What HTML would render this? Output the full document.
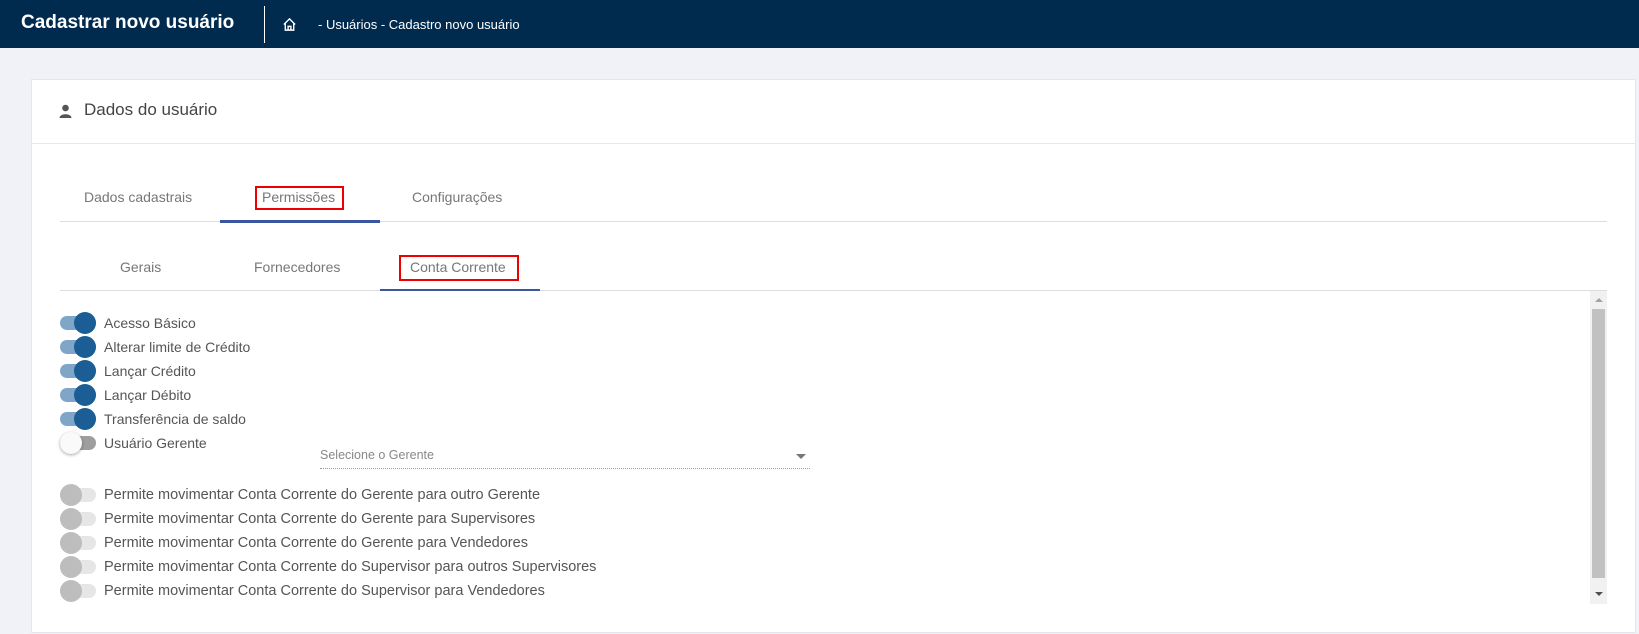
<!DOCTYPE html>
<html><head><meta charset="utf-8"><style>
*{margin:0;padding:0;box-sizing:border-box}
body{width:1639px;height:634px;background:#f1f2f7;font-family:"Liberation Sans",sans-serif;position:relative;overflow:hidden;color:#555}
.hdr{position:absolute;left:0;top:0;width:1639px;height:48px;background:#002b4f}
.abs{position:absolute;white-space:nowrap}
.card{position:absolute;left:31px;top:79px;width:1605px;height:554px;background:#fff;border:1px solid #e6e6ea}
.line{position:absolute;height:1px;background:#e0e0e0}
.tog{position:absolute;left:60px;width:36px;height:14px;border-radius:7px}
.knob{position:absolute;top:-4px;width:22px;height:22px;border-radius:50%}
.lbl{position:absolute;left:104px;font-size:14px;color:#555;white-space:nowrap}
.lb2{font-size:14.5px}
</style></head><body>
<div class="hdr"></div>
<div class="abs" style="left:21px;top:12px;font-size:19px;font-weight:bold;color:#fff">Cadastrar novo usuário</div>
<div class="abs" style="left:264px;top:6px;width:1px;height:37px;background:#fff"></div>
<svg class="abs" style="left:282px;top:17px" width="15" height="15" viewBox="0 0 16 16" fill="none" stroke="#fff" stroke-width="1.5"><path d="M2 8 L8 2 L14 8 M3.5 6.5 V14 H12.5 V6.5 M6.5 14 V10 H9.5 V14"/></svg>
<div class="abs" style="left:318px;top:17px;font-size:13px;color:#fff">- Usuários - Cadastro novo usuário</div>

<div class="card"></div>
<svg class="abs" style="left:59px;top:104px" width="13" height="14" viewBox="0 0 13 14"><circle cx="6.5" cy="4" r="3.3" fill="#555"/><path d="M0.5 14 C0.5 9 12.5 9 12.5 14Z" fill="#555"/></svg>
<div class="abs" style="left:84px;top:100px;font-size:17px;color:#444">Dados do usuário</div>
<div class="line" style="left:32px;top:143px;width:1603px;background:#e8e8ec"></div>

<div class="abs" style="left:84px;top:189px;font-size:14px;color:#777">Dados cadastrais</div>
<div class="abs" style="left:255px;top:186px;width:89px;height:24px;border:2px solid #e00"></div>
<div class="abs" style="left:262px;top:189px;font-size:14px;color:#777">Permissões</div>
<div class="abs" style="left:412px;top:189px;font-size:14px;color:#777">Configurações</div>
<div class="line" style="left:60px;top:221px;width:1547px;background:#ddd"></div>
<div class="abs" style="left:220px;top:220px;width:160px;height:3px;background:#3a56a0"></div>

<div class="abs" style="left:120px;top:259px;font-size:14px;color:#777">Gerais</div>
<div class="abs" style="left:254px;top:259px;font-size:14px;color:#777">Fornecedores</div>
<div class="abs" style="left:399px;top:255px;width:120px;height:26px;border:2px solid #e00"></div>
<div class="abs" style="left:410px;top:259px;font-size:14px;color:#777">Conta Corrente</div>
<div class="line" style="left:60px;top:290px;width:1547px;background:#ddd"></div>
<div class="abs" style="left:380px;top:289px;width:160px;height:2px;background:#3a56a0"></div>

<div class="abs" style="left:1590px;top:291px;width:17px;height:313px;background:#f1f1f1"></div>
<div class="abs" style="left:1592px;top:309px;width:13px;height:269px;background:#c1c1c1"></div>
<div class="abs" style="left:1595px;top:298px;width:0;height:0;border:4px solid transparent;border-bottom:4px solid #a3a3a3;border-top:0"></div>
<div class="abs" style="left:1595px;top:592px;width:0;height:0;border:4px solid transparent;border-top:4px solid #505050;border-bottom:0"></div>

<div class="tog" style="top:316px;background:#7fa6c8"><div class="knob" style="left:14px;background:#1b5e96"></div></div><div class="lbl" style="top:315px">Acesso Básico</div>
<div class="tog" style="top:340px;background:#7fa6c8"><div class="knob" style="left:14px;background:#1b5e96"></div></div><div class="lbl" style="top:339px">Alterar limite de Crédito</div>
<div class="tog" style="top:364px;background:#7fa6c8"><div class="knob" style="left:14px;background:#1b5e96"></div></div><div class="lbl" style="top:363px">Lançar Crédito</div>
<div class="tog" style="top:388px;background:#7fa6c8"><div class="knob" style="left:14px;background:#1b5e96"></div></div><div class="lbl" style="top:387px">Lançar Débito</div>
<div class="tog" style="top:412px;background:#7fa6c8"><div class="knob" style="left:14px;background:#1b5e96"></div></div><div class="lbl" style="top:411px">Transferência de saldo</div>
<div class="tog" style="top:436px;background:#9e9e9e"><div class="knob" style="left:0;background:#fafafa;box-shadow:0 1px 3px rgba(0,0,0,.35)"></div></div><div class="lbl" style="top:435px">Usuário Gerente</div>

<div class="abs" style="left:320px;top:448px;font-size:12.5px;color:#888">Selecione o Gerente</div>
<div class="abs" style="left:320px;top:468px;width:490px;border-top:1px dotted #999"></div>
<div class="abs" style="left:796px;top:454px;width:0;height:0;border:5px solid transparent;border-top:5px solid #777;border-bottom:0"></div>

<div class="tog" style="top:488px;background:#e6e6e6"><div class="knob" style="left:0;background:#bdbdbd"></div></div><div class="lbl lb2" style="top:487px">Permite movimentar Conta Corrente do Gerente para outro Gerente</div>
<div class="tog" style="top:512px;background:#e6e6e6"><div class="knob" style="left:0;background:#bdbdbd"></div></div><div class="lbl lb2" style="top:511px">Permite movimentar Conta Corrente do Gerente para Supervisores</div>
<div class="tog" style="top:536px;background:#e6e6e6"><div class="knob" style="left:0;background:#bdbdbd"></div></div><div class="lbl lb2" style="top:535px">Permite movimentar Conta Corrente do Gerente para Vendedores</div>
<div class="tog" style="top:560px;background:#e6e6e6"><div class="knob" style="left:0;background:#bdbdbd"></div></div><div class="lbl lb2" style="top:559px">Permite movimentar Conta Corrente do Supervisor para outros Supervisores</div>
<div class="tog" style="top:584px;background:#e6e6e6"><div class="knob" style="left:0;background:#bdbdbd"></div></div><div class="lbl lb2" style="top:583px">Permite movimentar Conta Corrente do Supervisor para Vendedores</div>
</body></html>
